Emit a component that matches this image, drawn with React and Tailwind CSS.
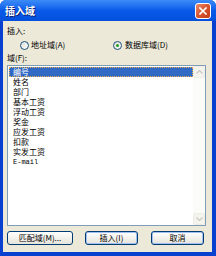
import React from "react";

const cjk = { fontFamily: '"Noto Sans CJK SC", "Noto Sans", sans-serif' };

function Radio({ checked }) {
  return (
    <span className="relative inline-flex h-[9px] w-[9px] shrink-0 items-center justify-center rounded-full border border-[#1C5180] bg-gradient-to-br from-[#DCDCD7] to-white">
      {checked && <span className="h-[3px] w-[3px] rounded-full bg-[#21A121]" />}
    </span>
  );
}

function Arrow({ up }) {
  return (
    <svg width="7" height="4" viewBox="0 0 7 4">
      <path d={up ? "M0.5 3.5 L3.5 0.5 L6.5 3.5" : "M0.5 0.5 L3.5 3.5 L6.5 0.5"} fill="none" stroke="#C9CBC0" strokeWidth="1.2" />
    </svg>
  );
}

function Btn({ children, w, focus }) {
  return (
    <div
      className={`flex h-[14px] items-center justify-center rounded-[3px] border border-[#003C74] bg-gradient-to-b from-white to-[#E6E4DA] text-[8px] leading-none text-black ${w} ${focus ? "shadow-[inset_0_0_0_1px_#9FC0F0]" : ""}`}
    >
      {children}
    </div>
  );
}

export default function App() {
  const items = ["编号", "姓名", "部门", "基本工资", "浮动工资", "奖金", "应发工资", "扣款", "实发工资"];
  return (
    <div className="flex h-[256px] w-[216px] flex-col overflow-hidden rounded-t-[6px] bg-[#0841D0]" style={cjk}>
      <div className="flex h-[21px] shrink-0 items-center justify-between bg-gradient-to-b from-[#3C8CF8] via-[#0A5AEA] to-[#0450DC] pl-[5px] pr-[5px]">
        <span className="text-[10px] font-bold leading-none text-white [text-shadow:1px_1px_0_#0A1E6E]">插入域</span>
        <div className="flex h-[16px] w-[16px] items-center justify-center rounded-[3px] border border-white bg-gradient-to-br from-[#E88A6C] via-[#D9532E] to-[#C23A15]">
          <svg width="8" height="8" viewBox="0 0 8 8">
            <path d="M1 1 L7 7 M7 1 L1 7" stroke="white" strokeWidth="1.6" strokeLinecap="square" />
          </svg>
        </div>
      </div>
      <div className="mb-[4px] ml-[3px] mr-[4px] flex flex-1 flex-col bg-[#ECE9D8] pl-[4px] pr-[6px] pt-[5px]">
        <div className="h-[10px] text-[8px] leading-[10px] text-black">插入:</div>
        <div className="mt-[4px] flex h-[10px] items-center text-[8px] leading-[10px] text-black">
          <div className="ml-[13px] flex w-[93px] items-center gap-[2px]">
            <Radio />
            <span>地址域(A)</span>
          </div>
          <div className="flex items-center gap-[3px]">
            <Radio checked />
            <span>数据库域(D)</span>
          </div>
        </div>
        <div className="mt-[3px] h-[10px] text-[8px] leading-[10px] text-black">域(F):</div>
        <div className="mt-[2px] flex h-[161px] border border-[#7F9DB9] bg-white">
          <div className="flex flex-1 flex-col p-[1px] pr-0">
            {items.map((t, i) => (
              <div
                key={t}
                className={`h-[10px] pl-[4px] text-[8px] leading-[10px] ${i === 0 ? "bg-[#316AC5] text-white outline-1 outline-dotted outline-[#E8B04A] -outline-offset-1" : "text-black"}`}
              >
                {t}
              </div>
            ))}
            <div className="h-[10px] pl-[4px] text-[7px] leading-[10px] text-black" style={{ fontFamily: '"Liberation Mono", monospace' }}>
              E-mail
            </div>
          </div>
          <div className="flex w-[12px] flex-col justify-between bg-[#FBFBF8]">
            <div className="flex h-[12px] items-center justify-center rounded-[2px] border border-[#EEEDE5] bg-[#F4F3EE]">
              <Arrow up />
            </div>
            <div className="flex h-[12px] items-center justify-center rounded-[2px] border border-[#EEEDE5] bg-[#F4F3EE]">
              <Arrow />
            </div>
          </div>
        </div>
        <div className="mt-[5px] flex items-center">
          <Btn w="w-[66px]">匹配域(M)...</Btn>
          <div className="ml-[12px]">
            <Btn w="w-[53px]" focus>插入(I)</Btn>
          </div>
          <div className="ml-[13px]">
            <Btn w="w-[53px]" focus>取消</Btn>
          </div>
        </div>
      </div>
    </div>
  );
}
